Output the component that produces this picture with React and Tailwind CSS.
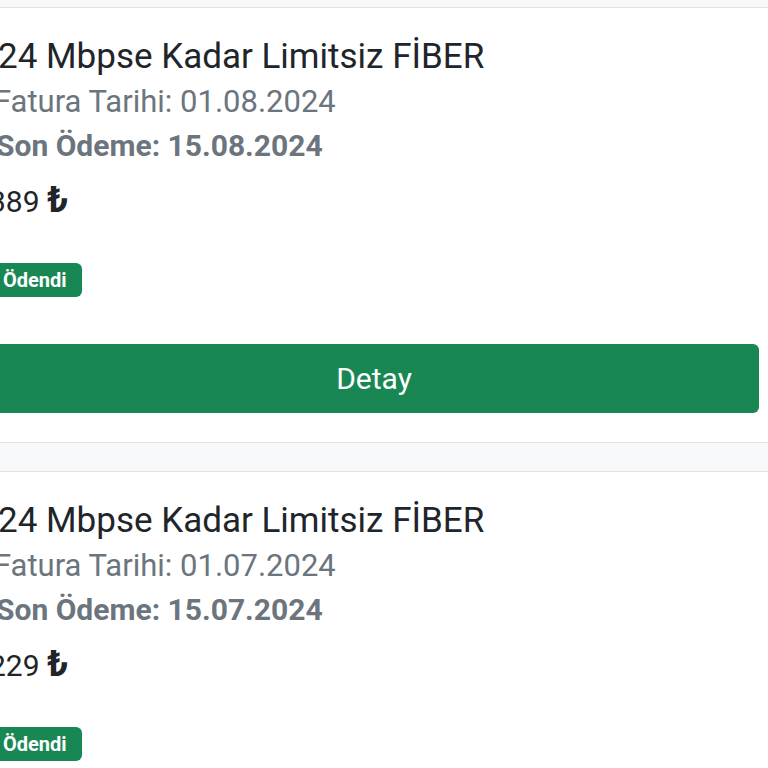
const invoices = [
  { id: 1, plan: '24 Mbpse Kadar Limitsiz FİBER', billDate: '01.08.2024', dueDate: '15.08.2024', amount: '389', status: 'Ödendi' },
  { id: 2, plan: '24 Mbpse Kadar Limitsiz FİBER', billDate: '01.07.2024', dueDate: '15.07.2024', amount: '229', status: 'Ödendi' },
];

function InvoiceCard({ invoice }) {
  return (
    <div className="bg-white border-y border-[#dee2e6] pt-[27px] pb-[29px]">
      <div className="-ml-[11px] w-[770px]">
        <div className="ml-[9px] text-[35px] leading-[44px] text-[#212529] whitespace-nowrap">{invoice.plan}</div>
        <div className="mt-[1px] ml-[5px] text-[31px] leading-[44px] text-[#6c757d] whitespace-nowrap">
          Fatura Tarihi: {invoice.billDate}
        </div>
        <div className="ml-[7px] text-[30px] leading-[44px] font-bold text-[#6c757d] whitespace-nowrap">
          Son Ödeme: {invoice.dueDate}
        </div>
        <div className="mt-[10px] text-[30px] leading-[44px] text-[#212529] whitespace-nowrap">
          {invoice.amount} <span className="text-[36px] font-bold">₺</span>
        </div>
        <div className="mt-[39px] flex">
          <span className="inline-flex h-[34px] items-center rounded-[6px] bg-[#198754] pl-[14px] pr-[15px] text-[20px] font-bold text-white">
            {invoice.status}
          </span>
        </div>
        <button className="mt-[47px] flex h-[69px] w-full items-center justify-center rounded-[6px] bg-[#198754] text-[30px] text-white">
          Detay
        </button>
      </div>
    </div>
  );
}

export default function App() {
  return (
    <div className="h-[768px] w-[768px] overflow-hidden bg-[#f8f9fa] font-['Roboto','Noto_Sans',sans-serif]">
      <div className="h-[7px]" />
      <div className="flex flex-col gap-[28px]">
        {invoices.map((inv) => (
          <InvoiceCard key={inv.id} invoice={inv} />
        ))}
      </div>
    </div>
  );
}
